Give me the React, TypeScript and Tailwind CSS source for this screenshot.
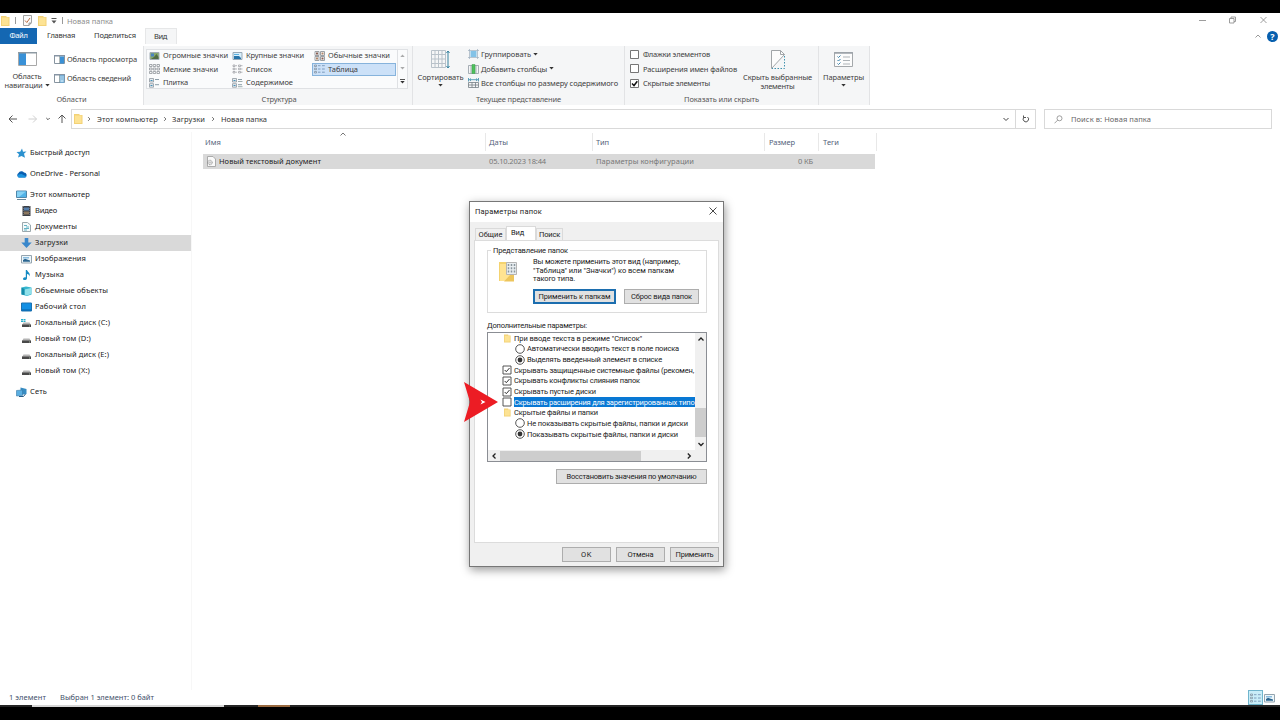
import type { ReactNode } from "react";

// Single line of text whose tracking is adjusted so that it fills `w` pixels.
const Label = ({
  w,
  children,
  className = "",
}: {
  w: number;
  children: string;
  className?: string;
}) => {
  const fit = (el: HTMLSpanElement | null) => {
    if (!el) return;
    el.style.letterSpacing = "0px";
    const natural = el.getBoundingClientRect().width;
    el.style.letterSpacing = `${(w - natural) / children.length}px`;
  };
  return (
    <span ref={fit} className={`inline-block shrink-0 self-center whitespace-nowrap ${className}`}>
      {children}
    </span>
  );
};

const Folder = ({ className = "h-[10px] w-[9px]" }: { className?: string }) => (
  <svg viewBox="0 0 9 10" className={`shrink-0 ${className}`}>
    <path d="M0 0h5.500v1H8.500v9H0z" fill="#f3d276" />
    <path d="M1 1.500h6.500v7.500H1z" fill="#fde394" />
  </svg>
);

const Chevron = ({ d, className }: { d: string; className: string }) => (
  <svg viewBox="0 0 8 8" fill="none" stroke="currentColor" className={`shrink-0 ${className}`}>
    <path d={d} />
  </svg>
);

const UP = "M1.5 5.5L4 3l2.5 2.5";
const DOWN = "M1.5 3L4 5.5 6.5 3";
const LEFT = "M5.5 1.5L3 4l2.5 2.5";
const RIGHT = "M2.8 1.5L5.3 4 2.8 6.5";

const Triangle = ({ className = "" }: { className?: string }) => (
  <svg viewBox="0 0 5 3" className={`h-[3px] w-[5px] shrink-0 ${className}`}>
    <path d="M.3 0h4.4L2.5 2.6z" fill="#333" />
  </svg>
);

const TitleBar = () => (
  <div className="flex h-[15px] items-center text-[#8c8c8c]">
    <Folder className="ml-px h-[10px] w-[9px]" />
    <div className="ml-[5px] h-[7px] w-px bg-[#999]" />
    <svg viewBox="0 0 9 11" className="ml-[7px] h-[11px] w-[9px]" fill="none">
      <path d="M.5.5h8v7l-2.500 3h-5.500z" fill="#fafafa" stroke="#a2a2a2" />
      <path d="M2 5.500L3.800 7.500 7 3" stroke="#bd7046" />
      <path d="M6 10.500V8h2.500" stroke="#777" strokeWidth=".7" />
    </svg>
    <Folder className="ml-[6px] h-[10px] w-[9px]" />
    <svg viewBox="0 0 6 6" className="ml-[4px] h-[6px] w-[6px]">
      <path d="M.5 0h5v1h-5zM.5 2.500h5L3 5.500z" fill="#555" />
    </svg>
    <div className="ml-[5px] h-[7px] w-px bg-[#999]" />
    <Label w={46} className="ml-[4px]">Новая папка</Label>
    <svg viewBox="0 0 70 10" className="mr-[12px] mb-[2px] ml-auto h-[10px] w-[70px]" fill="none" stroke="#929292">
      <path d="M1 5.500h7M31.500 3.500h4.500v4.500h-4.500zM33 3.500V2h4.500v4.500H36M62.500 2l6 6M68.500 2l-6 6" strokeWidth=".9" />
    </svg>
  </div>
);

const Tabs = () => (
  <div className="flex h-[16px] items-center text-[#333]">
    <div className="flex h-full w-[37px] justify-center bg-[#1467b2] text-white">
      <Label w={18} className="mb-[2px]">Файл</Label>
    </div>
    <Label w={28} className="mb-[2px] ml-[10px]">Главная</Label>
    <Label w={42} className="mb-[2px] ml-[19px]">Поделиться</Label>
    <div className="ml-[9px] flex h-full w-[32px] border-x border-t border-[#e6e7e8] bg-[#f5f6f7] pl-[8px]">
      <Label w={13} className="mb-[2px]">Вид</Label>
    </div>
    <Chevron d={UP} className="ml-auto h-[8px] w-[8px] text-[#999]" />
    <div className="mr-[2px] ml-[5px] flex h-[11px] w-[11px] items-center justify-center rounded-full bg-[#075fae] text-[9px] leading-none font-bold text-white">
      ?
    </div>
  </div>
);

const PaneIcon = ({ side }: { side: "left" | "right" }) => (
  <svg viewBox="0 0 11 9" className="h-[9px] w-[11px] shrink-0">
    <path d="M.5.5h10v8H.5z" fill="#fff" stroke="#8794a0" />
    <path d="M0 0h11v1.500H0z" fill="#8795a4" />
    {side === "right" ? (
      <path d="M6 1.500h4v7H6z" fill="#3b91d5" />
    ) : (
      <path d="M6 1.500h4v7H6zM7 3h2M7 5h2" fill="#b5d9ef" stroke="#5b9fce" strokeWidth=".7" />
    )}
    <path d="M5.500 1v8" stroke="#788" strokeWidth=".6" />
  </svg>
);

const Group = ({
  title,
  titleWidth,
  className,
  children,
}: {
  title?: string;
  titleWidth?: number;
  className: string;
  children: ReactNode;
}) => (
  <section className={`flex h-[59px] shrink-0 flex-col border-r border-[#e2e3e5] ${className}`}>
    <div className="flex h-[47px]">{children}</div>
    {title && (
      <div className="flex h-[11px] justify-center text-[#555]">
        <Label w={titleWidth ?? 40}>{title}</Label>
      </div>
    )}
  </section>
);

const views = [
  { name: "Огромные значки", w: 65, kind: "photo" },
  { name: "Крупные значки", w: 58, kind: "wide" },
  { name: "Обычные значки", w: 62, kind: "four" },
  { name: "Мелкие значки", w: 55, kind: "grid" },
  { name: "Список", w: 26, kind: "list" },
  { name: "Таблица", w: 30, kind: "table" },
  { name: "Плитка", w: 25, kind: "tile" },
  { name: "Содержимое", w: 47, kind: "content" },
];

const ViewIcon = ({ kind }: { kind: string }) => (
  <svg viewBox="0 0 11 10" className="h-[10px] w-[11px] shrink-0" fill="none">
    {kind === "photo" && (
      <>
        <path d="M1 1.500h9v7H1z" fill="#87a96b" stroke="#a0abb4" />
        <path d="M2 2.500h3v3H2z" fill="#4a83c1" />
        <path d="M5 6l2.500-3 2 3v2H2z" fill="#516b43" />
      </>
    )}
    {kind === "wide" && (
      <>
        <path d="M1 1.500h9v7H1z" fill="#d8effb" stroke="#99a9b6" />
        <path d="M2 5h5l2 2v1H2z" fill="#2875a9" />
        <path d="M2 3h5v1H2z" fill="#5cb0df" />
      </>
    )}
    {kind === "four" && (
      <>
        <path d="M1 .5h4v4H1zM6.500.5h4v4h-4zM1 5.500h4v4H1zM6.500 5.500h4v4h-4z" stroke="#9ba0a5" />
        <path d="M2 1.500h2v2H2zM7.500 6.500h2v2h-2z" fill="#875f52" />
        <path d="M7.500 1.500h2v2h-2zM2 6.500h2v2H2z" fill="#b08668" />
      </>
    )}
    {kind === "grid" && (
      <path
        d="M.5.5h2.500v2H.5zM4.200.5h2.500v2H4.200zM8 .5h2.500v2H8zM.5 4h2.500v2H.5zM4.200 4h2.500v2H4.200zM8 4h2.500v2H8zM.5 7.500h2.500v2H.5zM4.200 7.500h2.500v2H4.200zM8 7.500h2.500v2H8z"
        stroke="#91959a"
        strokeWidth=".8"
      />
    )}
    {kind === "list" && (
      <path
        d="M1 1h2v1.500H1zM1 4.200h2v1.500H1zM1 7.500h2V9H1zM6.500 1h2v1.500h-2zM6.500 4.200h2v1.500h-2zM6.500 7.500h2V9h-2zM3.500 1.700H5M3.500 5H5M3.500 8.200H5M9 1.700h1.500M9 5h1.500M9 8.200h1.500"
        stroke="#969a9f"
        strokeWidth=".7"
      />
    )}
    {kind === "table" && (
      <>
        <path d="M.5 1h2v1.500h-2zM.5 4.200h2v1.500h-2zM.5 7.500h2V9h-2z" stroke="#7c8b9a" strokeWidth=".7" />
        <path
          d="M4 1.700h2.500M4 5h2.500M4 8.200h2.500M8 1.700h2.800M8 5h2.800M8 8.200h2.800"
          stroke="#6b8cae"
          strokeWidth=".8"
        />
      </>
    )}
    {(kind === "tile" || kind === "content") && (
      <>
        <path d="M.5.5h4v3.500h-4zM.5 5.700h4v3.500h-4z" fill="#e5edf1" stroke="#8f979e" strokeWidth=".8" />
        <path d="M1.500 2.500h2M1.500 7.500h2" stroke="#4691b8" />
        <path d="M6 1.500h4M6 6.700h4" stroke="#6e8592" strokeWidth=".8" />
        {kind === "content" && <path d="M6 3.500h4.500M6 8.700h4.500" stroke="#899" strokeWidth=".8" />}
      </>
    )}
  </svg>
);

const Check = ({ on }: { on?: boolean }) => (
  <svg viewBox="0 0 9 9" className="h-[9px] w-[9px] shrink-0" fill="none">
    <path d="M.5.5h8v8h-8z" fill="#fff" stroke="#666" strokeWidth=".9" />
    {on && <path d="M2 4.500l2 2 3.300-4.300" stroke="#111" strokeWidth="1.500" />}
  </svg>
);

const Ribbon = () => (
  <div className="flex h-[61px] pt-[2px] text-[#404040]">
    <Group title="Области" titleWidth={30} className="w-[144px]">
      <div className="flex w-[54px] flex-col items-center pt-[6px] leading-[9px]">
        <svg viewBox="0 0 19 14" className="mb-[6px] h-[14px] w-[19px]">
          <path d="M.5.5h18v13H.5z" fill="#fff" stroke="#a8a8a8" />
          <path d="M1 1h7v12H1z" fill="#3991d7" />
          <path d="M0 0h19v1.500H0z" fill="#8e9aa3" />
        </svg>
        <Label w={29}>Область</Label>
        <div className="flex items-center gap-[2px]">
          <Label w={38}>навигации</Label>
          <Triangle />
        </div>
      </div>
      <div className="flex flex-col pt-[8px]">
        <div className="flex h-[10px] items-center gap-[2px]">
          <PaneIcon side="right" />
          <Label w={70}>Область просмотра</Label>
        </div>
        <div className="mt-[9px] flex h-[10px] items-center gap-[2px]">
          <PaneIcon side="left" />
          <Label w={64}>Область сведений</Label>
        </div>
      </div>
    </Group>
    <Group title="Структура" titleWidth={35} className="w-[269px] bg-[#f5f6f7] pl-[2px]">
      <div className="mt-[3px] flex h-[40px] w-[262px] border border-[#dfe1e4] bg-[#fafbfc]">
        <div className="-mt-px grid w-[250px] grid-cols-[83px_82px_84px] grid-rows-[13.500px_13.500px_13.500px]">
          {views.map((v) => (
            <div
              key={v.name}
              className={`flex items-center gap-[3px] pl-[2px] ${
                v.kind === "table" ? "bg-[#cce1f8] outline -outline-offset-1 outline-[#86b3dc]" : ""
              }`}
            >
              <ViewIcon kind={v.kind} />
              <Label w={v.w} className="mb-px">{v.name}</Label>
            </div>
          ))}
        </div>
        <div className="flex flex-1 flex-col items-center justify-between border-l border-[#dfe1e4] py-[4px]">
          <Triangle className="rotate-180 opacity-40" />
          <Triangle className="opacity-40" />
          <div className="flex flex-col items-center gap-px">
            <div className="h-px w-[5px] bg-[#555]" />
            <Triangle />
          </div>
        </div>
      </div>
    </Group>
    <Group title="Текущее представление" titleWidth={85} className="w-[212px] bg-[#f5f6f7]">
      <div className="flex w-[55px] flex-col items-center pt-[4px] leading-[9px]">
        <svg viewBox="0 0 19 20" className="mb-[3px] h-[20px] w-[19px]" fill="none">
          <path d="M.5.5h14v17H.5zM4 .5v17M7.500.5v17M11 .5v17M.5 4.500h14M.5 9h14M.5 13.500h14" stroke="#b9c2ca" />
          <path d="M17 1v17M15.500 3L17 1l1.500 2M15.500 16l1.500 2 1.500-2" stroke="#37819e" />
        </svg>
        <Label w={46}>Сортировать</Label>
        <Triangle className="mt-[2px]" />
      </div>
      <div className="flex flex-col gap-[4.500px] pt-[3px]">
        <div className="flex h-[10px] items-center gap-[2px]">
          <svg viewBox="0 0 11 10" className="h-[10px] w-[11px]" fill="none">
            <path d="M1.500 0v10M9.500 0v10M0 1.500h11M0 8.500h11" stroke="#9eafbd" strokeWidth=".7" />
            <path d="M2.500 2h6v6h-6z" fill="#83c2e7" />
          </svg>
          <Label w={50}>Группировать</Label>
          <Triangle />
        </div>
        <div className="flex h-[10px] items-center gap-[2px]">
          <svg viewBox="0 0 11 10" className="h-[10px] w-[11px]" fill="none">
            <path d="M.5 1.500h10v8H.5zM3 1.500v8M8 1.500v8" stroke="#939ca4" strokeWidth=".8" />
            <path d="M4 .5h3v9H4z" fill="#4ec05c" stroke="#3a9f49" strokeWidth=".5" />
          </svg>
          <Label w={66}>Добавить столбцы</Label>
          <Triangle />
        </div>
        <div className="flex h-[10px] items-center gap-[2px]">
          <svg viewBox="0 0 11 10" className="h-[10px] w-[11px]" fill="none">
            <path d="M.5 4.500h10v5H.5zM.5 7h10M4 4.500v5M7.500 4.500v5" stroke="#747d84" strokeWidth=".8" />
            <path d="M.5 0v3.500M10.500 0v3.500M1.500 1.700h8M3 .5L1.500 1.700 3 3M8 .5l1.500 1.200L8 3" stroke="#3789a8" strokeWidth=".8" />
          </svg>
          <Label w={137}>Все столбцы по размеру содержимого</Label>
        </div>
      </div>
    </Group>
    <Group title="Показать или скрыть" titleWidth={75} className="w-[194px] bg-[#f5f6f7]">
      <div className="flex w-[117px] flex-col gap-[4.500px] pt-[3px] pl-[5px]">
        <div className="flex h-[10px] items-center gap-[4px]">
          <Check />
          <Label w={67}>Флажки элементов</Label>
        </div>
        <div className="flex h-[10px] items-center gap-[4px]">
          <Check />
          <Label w={94}>Расширения имен файлов</Label>
        </div>
        <div className="flex h-[10px] items-center gap-[4px]">
          <Check on />
          <Label w={67}>Скрытые элементы</Label>
        </div>
      </div>
      <div className="flex w-[71px] flex-col items-center pt-[4px] leading-[9px]">
        <svg viewBox="0 0 14 20" className="mb-[3px] h-[20px] w-[14px]" fill="none">
          <path d="M.5 18.500V.5h9l4 4L.5 18.500" fill="#fcfcfc" stroke="#a1a5a8" />
          <path d="M9.500.5v4h4" stroke="#a1a5a8" />
          <path d="M13.500 6v12.500H1" stroke="#3f91ad" strokeDasharray="1.500 1.500" />
        </svg>
        <Label w={69}>Скрыть выбранные</Label>
        <Label w={34}>элементы</Label>
      </div>
    </Group>
    <Group className="w-[51px] bg-[#f5f6f7]">
      <div className="flex w-[49px] flex-col items-center pt-[6px] leading-[9px]">
        <svg viewBox="0 0 19 15" className="mb-[6px] h-[15px] w-[19px]" fill="none">
          <path d="M.5.5h18v14H.5z" fill="#fcfcfc" stroke="#a4a8ab" />
          <path d="M0 1h19" stroke="#9ba2a8" strokeWidth="1.500" />
          <path d="M3.500 4.500l1 1 2-2M3.500 8l1 1 2-2M3.500 11.500l1 1 2-2" stroke="#3b83ab" />
          <path d="M9 5h7M9 8.500h7M9 12h7" stroke="#aeb4b8" />
        </svg>
        <Label w={41}>Параметры</Label>
        <Triangle className="mt-[2px]" />
      </div>
    </Group>
  </div>
);

const AddressRow = () => (
  <div className="flex h-[27px] items-start pt-[4px]">
    <div className="flex h-[20px] w-[71px] items-center pl-[8px]">
      <svg viewBox="0 0 60 10" className="h-[10px] w-[60px]" fill="none">
        <path d="M1 5h8M4.500 1.500L1 5l3.500 3.500" stroke="#555" />
        <path d="M20.500 5h8M25 1.500L28.500 5 25 8.500" stroke="#d0d0d0" />
        <path d="M38.300 4l1.700 1.700L41.700 4" stroke="#555" />
        <path d="M54 9V1M50.500 4.500L54 1l3.500 3.500" stroke="#555" />
      </svg>
    </div>
    <div className="flex h-[20px] w-[965px] items-center border border-[#d9d9d9] pl-[2px] text-[#333]">
      <Folder />
      <Chevron d={RIGHT} className="mx-[3px] h-[6px] w-[6px] text-[#444]" />
      <Label w={61} className="mb-px ml-[2px]">Этот компьютер</Label>
      <Chevron d={RIGHT} className="mx-[4px] h-[6px] w-[6px] text-[#444]" />
      <Label w={33} className="mb-px">Загрузки</Label>
      <Chevron d={RIGHT} className="mx-[5px] h-[6px] w-[6px] text-[#444]" />
      <Label w={46} className="mb-px">Новая папка</Label>
      <Chevron d={DOWN} className="mr-[5px] ml-auto h-[8px] w-[8px] text-[#444]" />
      <div className="flex h-full w-[20px] items-center justify-center border-l border-[#d9d9d9]">
        <svg viewBox="0 0 8 8" className="h-[8px] w-[8px]" fill="none" stroke="#555">
          <path d="M2 2.200A2.700 2.700 0 1 0 5.500 2M1.500.5v2h2.500" />
        </svg>
      </div>
    </div>
    <div className="ml-[8px] flex h-[20px] w-[228px] items-center border border-[#d9d9d9] text-[#666]">
      <svg viewBox="0 0 9 9" className="ml-[9px] h-[9px] w-[9px]" fill="none" stroke="#888">
        <circle cx="5.500" cy="3.300" r="2.500" strokeWidth=".8" />
        <path d="M3.600 5.200L.5 8.300" strokeWidth=".8" />
      </svg>
      <Label w={80} className="mb-px ml-[8px]">Поиск в: Новая папка</Label>
    </div>
  </div>
);

const icons: Record<string, ReactNode> = {
  star: <path d="M6 .5l1 3.200 3.500-.2-2.500 2.300 1 4L5.500 8 2 9.500l1-3.300L.5 4l3.700-.2z" fill="#2b91cf" />,
  cloud: (
    <>
      <path d="M2.800 8.500A2.500 2.500 0 0 1 2.500 4 3.200 3.200 0 0 1 8 3.500 2.600 2.600 0 0 1 9 8.500z" fill="#0a5fb0" />
      <path d="M2.500 8.500a1.800 1.800 0 0 1 0-3l3-.5 5 2.500a1.500 1.500 0 0 1-1.500 1z" fill="#1c93de" />
    </>
  ),
  pc: (
    <>
      <path d="M.5 1h10v6.500H.5z" fill="#51b3e8" stroke="#5087aa" />
      <path d="M1 1.500h9L3 7H1z" fill="#86d2f5" />
      <path d="M1 9.500h9" stroke="#67889b" />
    </>
  ),
  video: (
    <>
      <path d="M1.500 0h8v10h-8z" fill="#3c3f45" />
      <path d="M3 1.500h5v3H3z" fill="#557fad" />
      <path d="M3 5.500h5v3H3z" fill="#8c7860" />
      <path d="M2.200 0v10M8.800 0v10" stroke="#aaa" strokeWidth=".6" strokeDasharray="1 1" />
    </>
  ),
  doc: (
    <>
      <path d="M1.500.5h5l3 2.500v6.500h-8z" fill="#f5fafb" stroke="#9ba8ad" />
      <path d="M3 3.500h3M5 5h3M3 6.500h5M3 8h3" stroke="#43a2b9" strokeWidth=".8" />
    </>
  ),
  down: <path d="M3.700 0h3.600v4.500h3.400L5.500 10 .3 4.500h3.400z" fill="#3987cb" />,
  image: (
    <>
      <path d="M.5 1.500h10v7.500H.5z" fill="#eef7fb" stroke="#94a4af" />
      <path d="M2 3h6v1.500H2z" fill="#8abde0" />
      <path d="M2 7.700V6l2-1.200L9 6.500v1.200z" fill="#29648f" />
    </>
  ),
  music: (
    <path d="M4.800 0h1.200c.5 2 3.500 2.500 2.700 6.500-.3-1.500-1.200-2.300-2.700-2.500V8.200C6 9.500 4.700 10 3.500 10S1.700 9 2.200 8.200 3.800 7.200 4.800 7.500z" fill="#168bc3" />
  ),
  cube: (
    <>
      <path d="M.5 1.500L5 .5l5.500 1v7L6 10 .5 8.500z" fill="#36b6cf" />
      <path d="M3.500 3.500L10 2v6l-4 1.500-2.500-1z" fill="#8fe1ea" />
      <path d="M.5 1.500l3 1.500v6l-3-.5z" fill="#168ca9" />
    </>
  ),
  desktop: (
    <>
      <path d="M.5 1h10v8H.5z" fill="#1290e4" stroke="#1c72b0" />
      <path d="M1 8h9" stroke="#0761a5" />
    </>
  ),
  disk: (
    <>
      <path d="M2.500 4.500h6L10 7H1z" fill="#b4b4b4" />
      <path d="M1 6.500h9v2.500H1z" fill="#494949" />
      <path d="M8 8h1" stroke="#d1e5cf" strokeWidth=".7" />
    </>
  ),
  net: (
    <>
      <path d="M4.500.5l6 1.500v5l-6 1z" fill="#378cc2" />
      <path d="M.5 3.500l6-.5v5.500l-6 .5z" fill="#5aaee1" stroke="#387ba8" strokeWidth=".6" />
      <path d="M3 9.500h4.500L9.500 7" stroke="#275c88" fill="none" />
    </>
  ),
};

const Icon = ({ name }: { name: string }) => (
  <svg viewBox="0 0 11 10" className="h-[10px] w-[11px] shrink-0">
    {name === "system" ? (
      <>
        {icons.disk}
        <path d="M0 1h2v1.300H0zM2.500 1h2v1.300h-2zM0 2.800h2v1.300H0zM2.500 2.800h2v1.300h-2z" fill="#26afcb" />
      </>
    ) : (
      icons[name]
    )}
  </svg>
);

const NavItem = ({
  icon,
  w,
  className,
  children,
}: {
  icon: string;
  w: number;
  className: string;
  children: string;
}) => (
  <div className={`flex shrink-0 items-center ${className}`}>
    <Icon name={icon} />
    <Label w={w} className="mb-[2px] ml-[3px]">
      {children}
    </Label>
  </div>
);

const places = [
  { name: "Видео", icon: "video", w: 22 },
  { name: "Документы", icon: "doc", w: 42 },
  { name: "Загрузки", icon: "down", w: 33 },
  { name: "Изображения", icon: "image", w: 51 },
  { name: "Музыка", icon: "music", w: 29 },
  { name: "Объемные объекты", icon: "cube", w: 73 },
  { name: "Рабочий стол", icon: "desktop", w: 51 },
  { name: "Локальный диск (C:)", icon: "system", w: 75 },
  { name: "Новый том (D:)", icon: "disk", w: 56 },
  { name: "Локальный диск (E:)", icon: "disk", w: 74 },
  { name: "Новый том (X:)", icon: "disk", w: 55 },
];

const Sidebar = () => (
  <nav className="flex w-[192px] shrink-0 flex-col border-r border-[#f7f7f7] pt-[10px] text-[#222]">
    <NavItem icon="star" w={60} className="h-[21px] pl-[16px]">Быстрый доступ</NavItem>
    <NavItem icon="cloud" w={70} className="h-[21px] pl-[16px]">OneDrive - Personal</NavItem>
    <NavItem icon="pc" w={60} className="h-[21px] pl-[16px]">Этот компьютер</NavItem>
    <div className="-mt-[2px] flex flex-col">
      {places.map((p) => (
        <NavItem
          key={p.name}
          icon={p.icon}
          w={p.w}
          className={p.icon === "down" ? "h-[16px] bg-[#d9d9d9] pl-[21px]" : "h-[16px] pl-[21px]"}
        >
          {p.name}
        </NavItem>
      ))}
    </div>
    <NavItem icon="net" w={17} className="mt-[2px] h-[21px] pl-[16px]">Сеть</NavItem>
  </nav>
);

const FileList = () => (
  <main className="flex flex-col pl-[11px]">
    <div className="mt-px grid h-[18px] grid-cols-[283px_107px_172px_54px_58px] grid-rows-[18px] text-[#53617a]">
      <div className="flex items-center border-r border-[#e8e8e8] pl-[2px]">
        <Label w={16}>Имя</Label>
        <Chevron d={UP} className="-mt-[3px] ml-[118px] h-[8px] w-[8px] self-start text-[#777]" />
      </div>
      <div className="flex border-r border-[#e8e8e8] pl-[3px]">
        <Label w={19}>Даты</Label>
      </div>
      <div className="flex border-r border-[#e8e8e8] pl-[3px]">
        <Label w={13}>Тип</Label>
      </div>
      <div className="flex border-r border-[#e8e8e8] pl-[4px]">
        <Label w={26}>Размер</Label>
      </div>
      <div className="flex border-r border-[#e8e8e8] pl-[4px]">
        <Label w={16}>Теги</Label>
      </div>
    </div>
    <div className="mt-[3px] grid h-[15px] w-[672px] grid-cols-[282px_107px_172px_54px_57px] bg-[#d9d9d9] text-[#777]">
      <div className="flex items-center pl-[3px] text-[#222]">
        <svg viewBox="0 0 10 11" className="mb-px h-[11px] w-[10px]" fill="none">
          <path d="M1.500.5h5.500l2.500 2.500v7.500h-8z" fill="#fafafa" stroke="#aaa" />
          <circle cx="4" cy="6.500" r="2.200" stroke="#888" strokeDasharray="1 .5" />
          <circle cx="4" cy="6.500" r=".8" stroke="#999" strokeWidth=".6" />
        </svg>
        <Label w={102} className="mb-[2px] ml-[3px]">Новый текстовый документ</Label>
      </div>
      <div className="flex pl-[4px]">
        <Label w={57} className="mb-[2px]">05.10.2023 18:44</Label>
      </div>
      <div className="flex pl-[4px]">
        <Label w={98} className="mb-[2px]">Параметры конфигурации</Label>
      </div>
      <div className="flex justify-end pr-[5px]">
        <Label w={15} className="mb-[2px]">0 КБ</Label>
      </div>
    </div>
  </main>
);

const Button = ({
  w,
  className,
  children,
}: {
  w: number;
  className: string;
  children: string;
}) => (
  <button className={`flex h-[15px] shrink-0 items-center justify-center bg-[#e1e1e1] ${className}`}>
    <Label w={w}>{children}</Label>
  </button>
);

const options = [
  { name: "При вводе текста в режиме \"Список\"", kind: "folder", w: 128 },
  { name: "Автоматически вводить текст в поле поиска", kind: "radio", w: 152 },
  { name: "Выделять введенный элемент в списке", kind: "radio", on: true, w: 135 },
  { name: "Скрывать защищенные системные файлы (рекомен,", kind: "check", on: true, w: 180 },
  { name: "Скрывать конфликты слияния папок", kind: "check", on: true, w: 126 },
  { name: "Скрывать пустые диски", kind: "check", on: true, w: 82 },
  { name: "Скрывать расширения для зарегистрированных типо", kind: "check", selected: true, w: 180.5 },
  { name: "Скрытые файлы и папки", kind: "folder", w: 84 },
  { name: "Не показывать скрытые файлы, папки и диски", kind: "radio", w: 161 },
  { name: "Показывать скрытые файлы, папки и диски", kind: "radio", on: true, w: 151 },
];

const OptionIcon = ({ kind, on }: { kind: string; on?: boolean }) => {
  if (kind === "folder") return <Folder className="ml-[16px] h-[9px] w-[7px]" />;
  return (
    <svg
      viewBox="0 0 10 10"
      className={`h-[10px] w-[10px] shrink-0 ${kind === "radio" ? "ml-[27px]" : "ml-[14px]"}`}
      fill="none"
    >
      {kind === "radio" ? (
        <>
          <circle cx="5" cy="5" r="4.300" fill="#fff" stroke="#444" strokeWidth=".9" />
          {on && <circle cx="5" cy="5" r="2.400" fill="#333" />}
        </>
      ) : (
        <>
          <path d="M1 1h8v8H1z" fill="#fff" stroke="#444" strokeWidth=".9" />
          {on && <path d="M2.700 5l1.600 1.700 3.200-3.700" stroke="#333" />}
        </>
      )}
    </svg>
  );
};

const OptionsTree = () => (
  <div className="flex h-[130px] w-[220px] flex-col border border-[#8b8e94] bg-white">
    <div className="flex h-[117px]">
      <div className="w-[207px]">
        {options.map((o) => (
          <div key={o.name} className="flex h-[10.650px] items-center">
            <OptionIcon kind={o.kind} on={o.on} />
            <div
              className={`ml-[2px] flex h-full items-center ${o.selected ? "bg-[#0878d4] text-white" : ""} ${
                o.kind === "folder" ? "pl-px" : ""
              }`}
            >
              <Label w={o.w}>{o.name}</Label>
            </div>
          </div>
        ))}
      </div>
      <div className="flex w-[11px] flex-col items-center bg-[#f0f0f0] py-[2px]">
        <Chevron d={UP} className="h-[8px] w-[8px] stroke-[1.300]" />
        <div className="mt-[65px] h-[29px] w-full bg-[#cdcdcd]" />
        <Chevron d={DOWN} className="mt-[3px] h-[8px] w-[8px] stroke-[1.300]" />
      </div>
    </div>
    <div className="flex h-[11px] w-[218px] items-center bg-[#f0f0f0] pl-[2px]">
      <Chevron d={LEFT} className="h-[8px] w-[8px] stroke-[1.300]" />
      <div className="ml-[2px] h-[10px] w-[141px] bg-[#cdcdcd]" />
      <Chevron d={RIGHT} className="ml-[44px] h-[8px] w-[8px] stroke-[1.300]" />
    </div>
  </div>
);

const FolderOptions = () => (
  <div className="absolute top-[201px] left-[469px] flex h-[366px] w-[255px] flex-col border border-[#777] bg-[#f0f0f0] font-[Roboto,sans-serif] text-[7.500px] leading-[9px] text-[#222] shadow-[1px_3px_9px_rgba(0,0,0,0.4)]">
    <div className="flex h-[20px] items-center justify-between bg-white pr-[6px] pb-[2px] pl-[5px]">
      <Label w={67}>Параметры папок</Label>
      <svg viewBox="0 0 8 8" className="h-[8px] w-[8px]" stroke="#333">
        <path d="M.5.5l7 7M7.500.5l-7 7" strokeWidth=".9" />
      </svg>
    </div>
    <div className="flex h-[18px] items-end pl-[5px]">
      <div className="flex h-[12px] w-[31px] justify-center border border-b-0 border-[#dadada]">
        <Label w={24}>Общие</Label>
      </div>
      <div className="-mb-px flex h-[15px] w-[30px] border border-b-0 border-[#dadada] bg-white pl-[4px]">
        <Label w={13} className="mb-[3px]">Вид</Label>
      </div>
      <div className="flex h-[12px] w-[27px] justify-center border border-b-0 border-[#dadada]">
        <Label w={21}>Поиск</Label>
      </div>
    </div>
    <div className="mx-[4px] flex h-[303px] flex-col border border-[#dcdcdc] bg-white pl-[12px]">
      <fieldset className="mt-[5px] flex h-[67px] w-[220px] flex-col border border-[#dcdcdc] pl-[12px]">
        <legend className="-ml-[9px] h-[9px] px-[2px]">
          <Label w={75}>Представление папок</Label>
        </legend>
        <div className="flex">
          <svg viewBox="0 0 19 21" className="mt-[6px] -ml-px h-[21px] w-[19px]" fill="none">
            <path d="M0 1h8v1.500h6V20H0z" fill="#f4d370" />
            <path d="M1 3h11v17H1z" fill="#ffe391" />
            <path d="M12 13h3v7.500H5z" fill="#edc55c" />
            <path d="M7.500 1.500h10v12h-10z" fill="#e9eef1" stroke="#b5b5b5" />
            <path d="M9.500 3v10M12.500 3v10M15.500 3v10" stroke="#8a969e" strokeWidth="1.500" strokeDasharray="2 1.300" />
          </svg>
          <div className="mt-[3px] ml-[15px] flex flex-col items-start leading-[8.700px]">
            <Label w={147} className="!self-start">Вы можете применить этот вид (например,</Label>
            <Label w={141} className="!self-start">"Таблица" или "Значки") ко всем папкам</Label>
            <Label w={42} className="!self-start">такого типа.</Label>
          </div>
        </div>
        <div className="mt-[5px] ml-[33px] flex gap-[8px]">
          <Button w={72} className="w-[83px] border-2 border-[#1c6eaf]">Применить к папкам</Button>
          <Button w={61} className="w-[75px] border border-[#adadad]">Сброс вида папок</Button>
        </div>
      </fieldset>
      <div className="mt-[6px] flex h-[13px] pb-px">
        <Label w={100}>Дополнительные параметры:</Label>
      </div>
      <OptionsTree />
      <Button w={130} className="mt-[7px] ml-[69px] w-[151px] border border-[#adadad]">
        Восстановить значения по умолчанию
      </Button>
    </div>
    <div className="flex justify-end gap-[5px] pt-[4px] pr-[4px]">
      <Button w={11} className="w-[49px] border border-[#adadad]">OK</Button>
      <Button w={26} className="w-[49px] border border-[#adadad]">Отмена</Button>
      <Button w={38} className="w-[49px] border border-[#adadad]">Применить</Button>
    </div>
  </div>
);

const StatusBar = () => (
  <footer className="flex h-[15px] items-center pl-[9px] text-[#42506a]">
    <Label w={37} className="mb-[2px]">1 элемент</Label>
    <Label w={94} className="mb-[2px] ml-[14px]">Выбран 1 элемент: 0 байт</Label>
    <div className="mr-[5px] ml-auto flex items-center gap-px">
      <div className="flex h-[15px] w-[15px] items-center justify-center border border-[#70b5cd] bg-[#c9edf8]">
        <ViewIcon kind="table" />
      </div>
      <Icon name="image" />
    </div>
  </footer>
);

export default function App() {
  return (
    <div className="relative flex h-[720px] w-[1280px] flex-col overflow-hidden bg-white font-['Noto_Sans',sans-serif] text-[7.500px] leading-[10px]">
      <div className="h-[13px] shrink-0 bg-black" />
      <TitleBar />
      <Tabs />
      <Ribbon />
      <AddressRow />
      <div className="flex flex-1">
        <Sidebar />
        <FileList />
      </div>
      <StatusBar />
      <div className="h-[15px] shrink-0 bg-black">
        <div className="flex h-[2px] bg-[#252525]">
          <div className="ml-[32px] h-[2px] w-[192px] bg-[#d6d6d6]" />
          <div className="ml-[34px] w-[32px] bg-[#98693f]" />
        </div>
      </div>
      <FolderOptions />
      <svg viewBox="0 0 35 40" className="absolute top-[382px] left-[464px] h-[40px] w-[35px]">
        <path d="M0 0l34 20L0 40l6-20z" fill="#ec1c24" />
        <path d="M16.500 17.500l5 2.500-5 2.500 1.500-2.500z" fill="#fff" />
      </svg>
    </div>
  );
}
